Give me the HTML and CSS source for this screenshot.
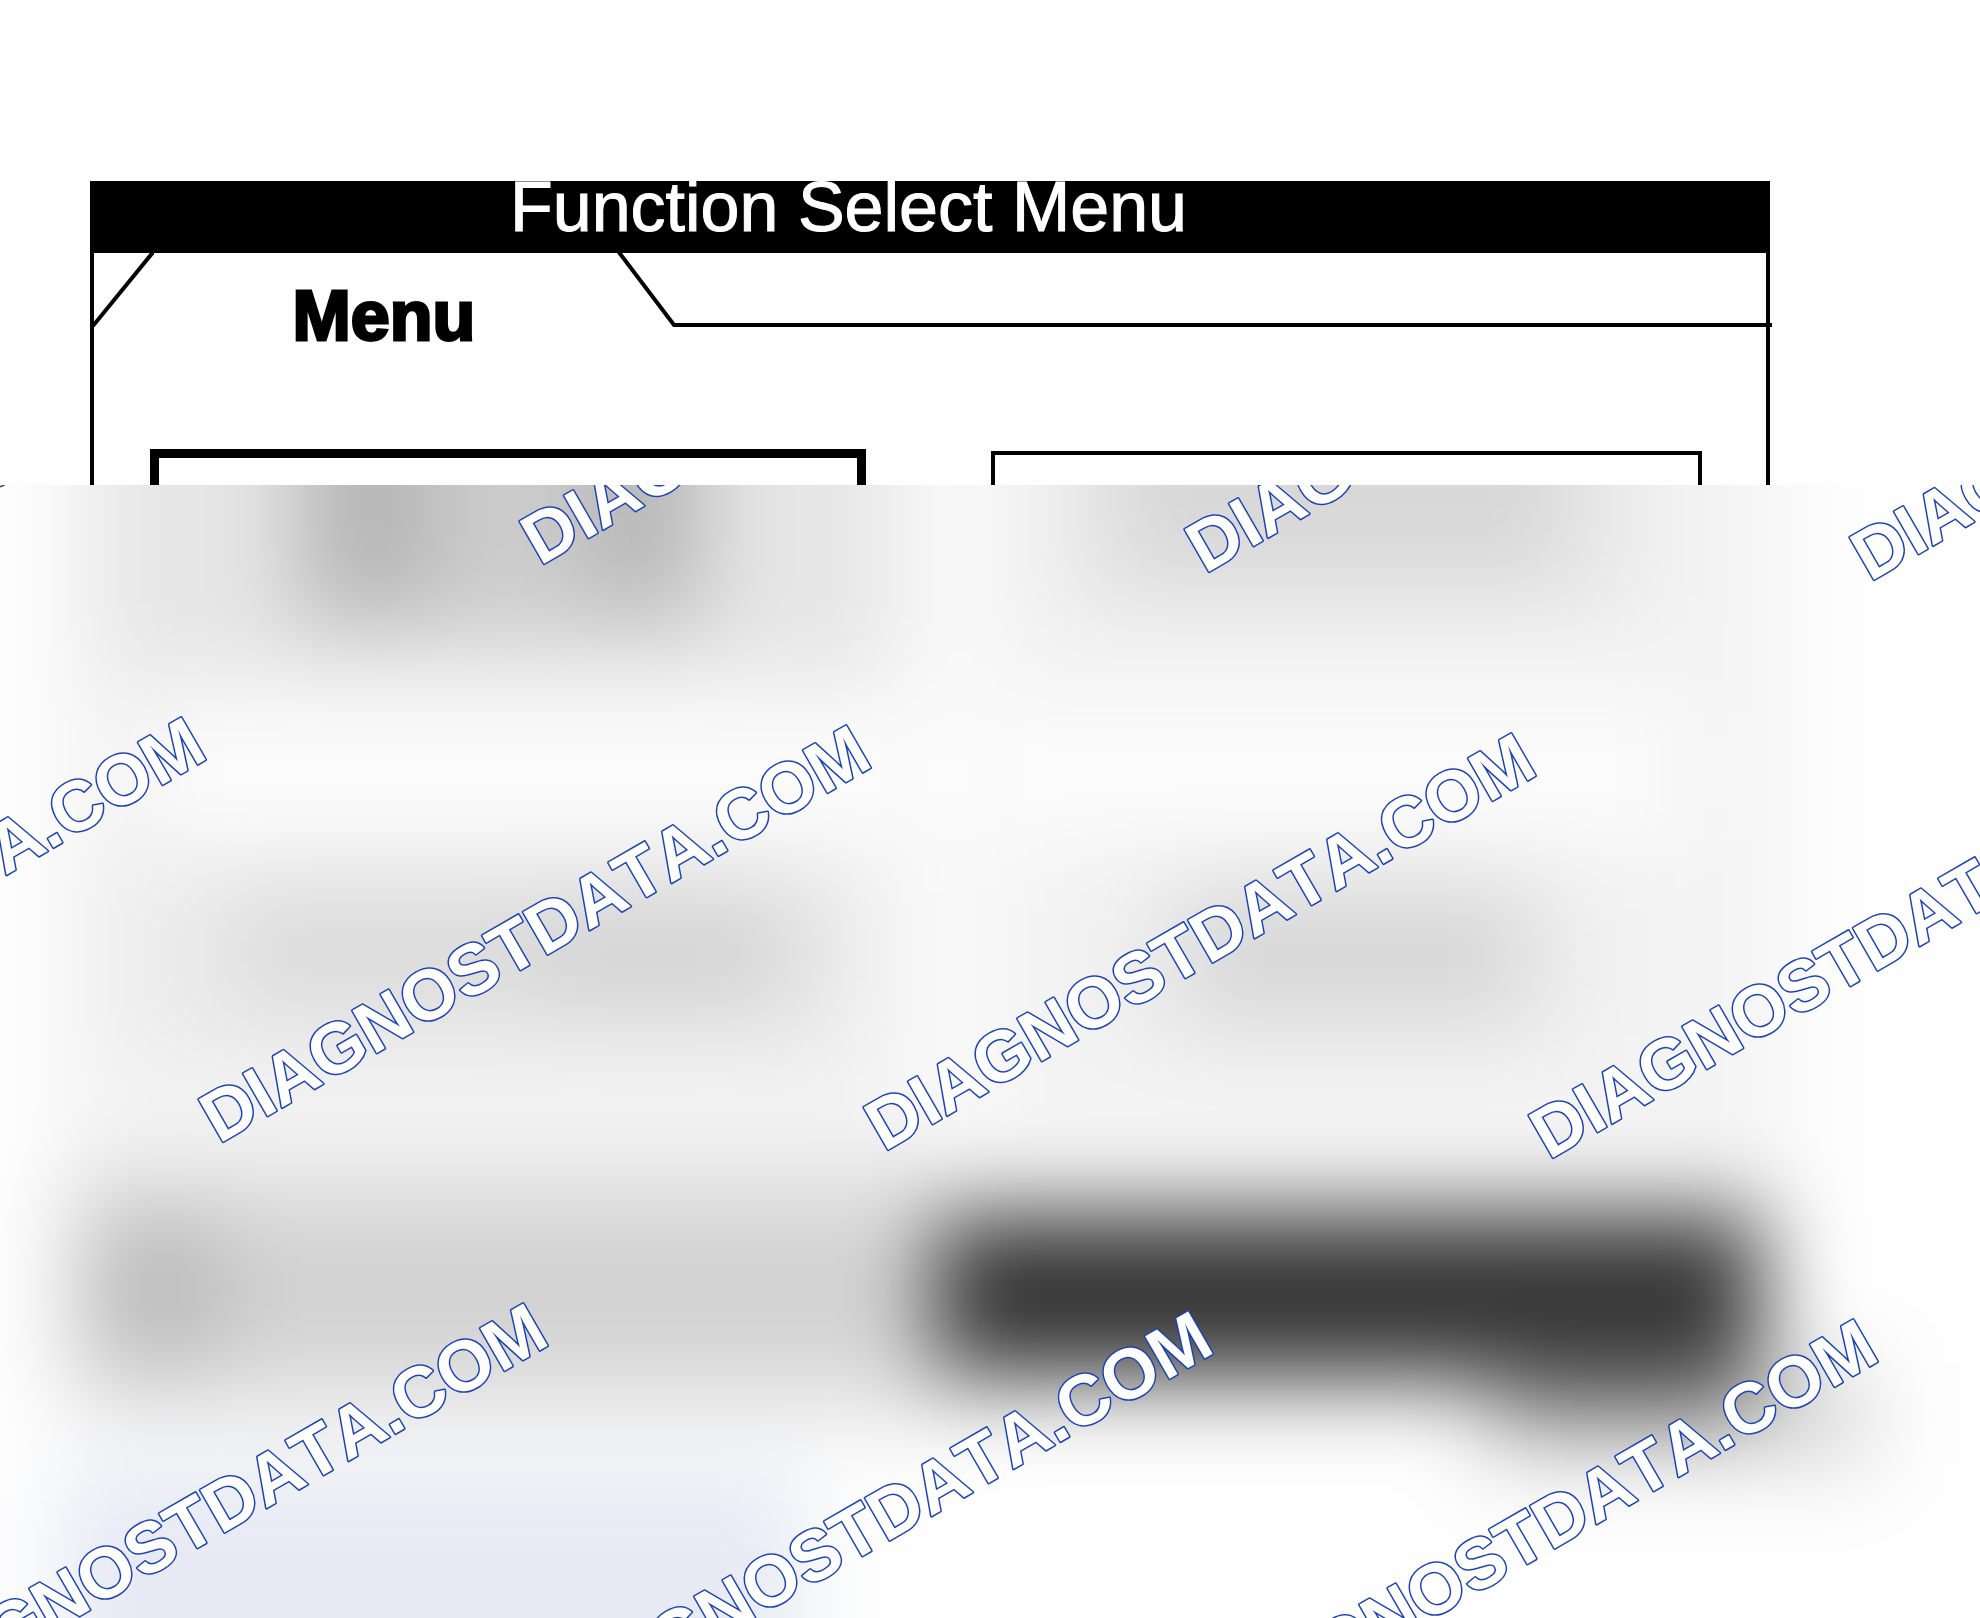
FILE: index.html
```html
<!DOCTYPE html>
<html lang="en">
<head>
    <meta charset="UTF-8">
    <meta name="viewport" content="width=device-width, initial-scale=1.0">
    <title>Function Select Menu</title>
    <link rel="stylesheet" href="styles.css">
</head>
<body>
    <div class="screen">
        <h1 class="title">Function Select Menu</h1>
        <div class="frame">
            <div class="tabs">
                <svg class="slant" width="60" height="74" viewBox="0 0 60 74">
                    <path d="M60 -2 L-2 74"/>
                </svg>
                <button class="tab" type="button">Menu</button>
                <svg class="slant" width="64" height="74" viewBox="0 0 64 74">
                    <path d="M4 -2 L60 72 L66 72"/>
                </svg>
                <div class="tab-line"></div>
            </div>
            <div class="options">
                <div class="option selected"></div>
                <div class="option"></div>
            </div>
        </div>
    </div>
    <div class="locked">
        <svg class="preview" viewBox="0 0 1980 1133">
            <defs>
                <filter id="soft" filterUnits="userSpaceOnUse" x="-200" y="-200" width="2400" height="1600" color-interpolation-filters="sRGB">
                    <feGaussianBlur stdDeviation="44"/>
                </filter>
            </defs>
            <g filter="url(#soft)">
                <rect x="-200" y="-200" width="2400" height="1600" fill="#fefefe"/>
                <rect x="60" y="-200" width="1730" height="1120" fill="#f4f4f4"/>
                <rect x="160" y="225" width="1520" height="130" fill="#fcfcfc"/>
                <rect x="910" y="-200" width="80" height="900" fill="#fafafa"/>
                <!-- first row -->
                <rect x="100" y="-200" width="790" height="390" fill="#e6e6e6"/>
                <rect x="290" y="-200" width="420" height="350" fill="#cccccc"/>
                <rect x="310" y="-200" width="120" height="320" fill="#b5b5b5"/>
                <rect x="590" y="-200" width="100" height="310" fill="#b5b5b5"/>
                <rect x="1040" y="-200" width="620" height="340" fill="#ebebeb"/>
                <rect x="1110" y="-200" width="460" height="300" fill="#d8d8d8"/>
                <!-- second row -->
                <rect x="110" y="370" width="760" height="210" fill="#ececec"/>
                <rect x="230" y="400" width="580" height="130" fill="#dcdcdc"/>
                <rect x="540" y="420" width="220" height="110" fill="#d4d4d4"/>
                <rect x="1080" y="370" width="540" height="210" fill="#efefef"/>
                <rect x="1180" y="400" width="350" height="140" fill="#d8d8d8"/>
                <!-- bottom bar -->
                <rect x="70" y="670" width="900" height="270" fill="#e8e8e8"/>
                <rect x="70" y="720" width="880" height="170" fill="#d2d2d2"/>
                <rect x="100" y="725" width="120" height="160" fill="#bcbcbc"/>
                <rect x="1480" y="880" width="390" height="100" fill="#d8d8d8"/>
                <rect x="938" y="730" width="822" height="162" fill="#343434"/>
                <rect x="1500" y="870" width="245" height="56" fill="#5c5c5c"/>
                <rect x="60" y="985" width="740" height="400" fill="#e7eaf4"/>
            </g>
            <g class="watermark">
                <text transform="translate(-125 73) rotate(-30)">DIAGNOSTDATA.COM</text>
                <text transform="translate(540 81) rotate(-30)">DIAGNOSTDATA.COM</text>
                <text transform="translate(1205 89) rotate(-30)">DIAGNOSTDATA.COM</text>
                <text transform="translate(1870 97) rotate(-30)">DIAGNOSTDATA.COM</text>
                <text transform="translate(-446 651) rotate(-30)">DIAGNOSTDATA.COM</text>
                <text transform="translate(219 659) rotate(-30)">DIAGNOSTDATA.COM</text>
                <text transform="translate(884 667) rotate(-30)">DIAGNOSTDATA.COM</text>
                <text transform="translate(1549 675) rotate(-30)">DIAGNOSTDATA.COM</text>
                <text transform="translate(-104 1237) rotate(-30)">DIAGNOSTDATA.COM</text>
                <text transform="translate(561 1245) rotate(-30)">DIAGNOSTDATA.COM</text>
                <text transform="translate(1226 1253) rotate(-30)">DIAGNOSTDATA.COM</text>
            </g>
        </svg>
    </div>
</body>
</html>
```
FILE: styles.css
```css
body {
    font-family: "Liberation Sans", Arial, sans-serif;
    margin: 0;
    background: #fefefe;
    color: #000;
}
.screen {
    padding: 181px 210px 0 90px;
}
.title {
    margin: 0;
    padding: 0 0 20px 25%;
    background: #000;
    color: #fff;
    font-size: 70px;
    font-weight: normal;
    line-height: 52px;
    white-space: nowrap;
    -webkit-text-stroke: 1px #fff;
}
.frame {
    border-left: 4px solid #000;
    border-right: 4px solid #000;
}
.tabs {
    display: flex;
    align-items: flex-start;
}
.slant {
    flex: none;
}
.slant path {
    fill: none;
    stroke: #000;
    stroke-width: 4px;
}
.tab {
    flex: 0 0 27.5%;
    padding: 0;
    border: 0;
    background: none;
    color: #000;
    font-family: inherit;
    font-size: 70px;
    font-weight: bold;
    line-height: 126px;
    -webkit-text-stroke: 3px #000;
}
.tab-line {
    flex: 1;
    height: 70px;
    margin-right: -6px;
    border-bottom: 4px solid #000;
}
.options {
    display: grid;
    grid-template-columns: 716fr 711fr;
    align-items: end;
    gap: 125px;
    padding: 70px 64px 0 56px;
}
.option {
    height: 30px;
    border: 4px solid #000;
    border-bottom: 0;
}
.option.selected {
    height: 27px;
    border-width: 9px;
    border-bottom: 0;
}
.locked {
    overflow: hidden;
}
.preview {
    display: block;
    width: 100%;
}
.watermark {
    fill: #fff;
    stroke: #1c43b4;
    stroke-width: 3px;
    stroke-linejoin: round;
    paint-order: stroke;
    font-size: 71px;
    font-weight: bold;
    font-kerning: none;
}
```
